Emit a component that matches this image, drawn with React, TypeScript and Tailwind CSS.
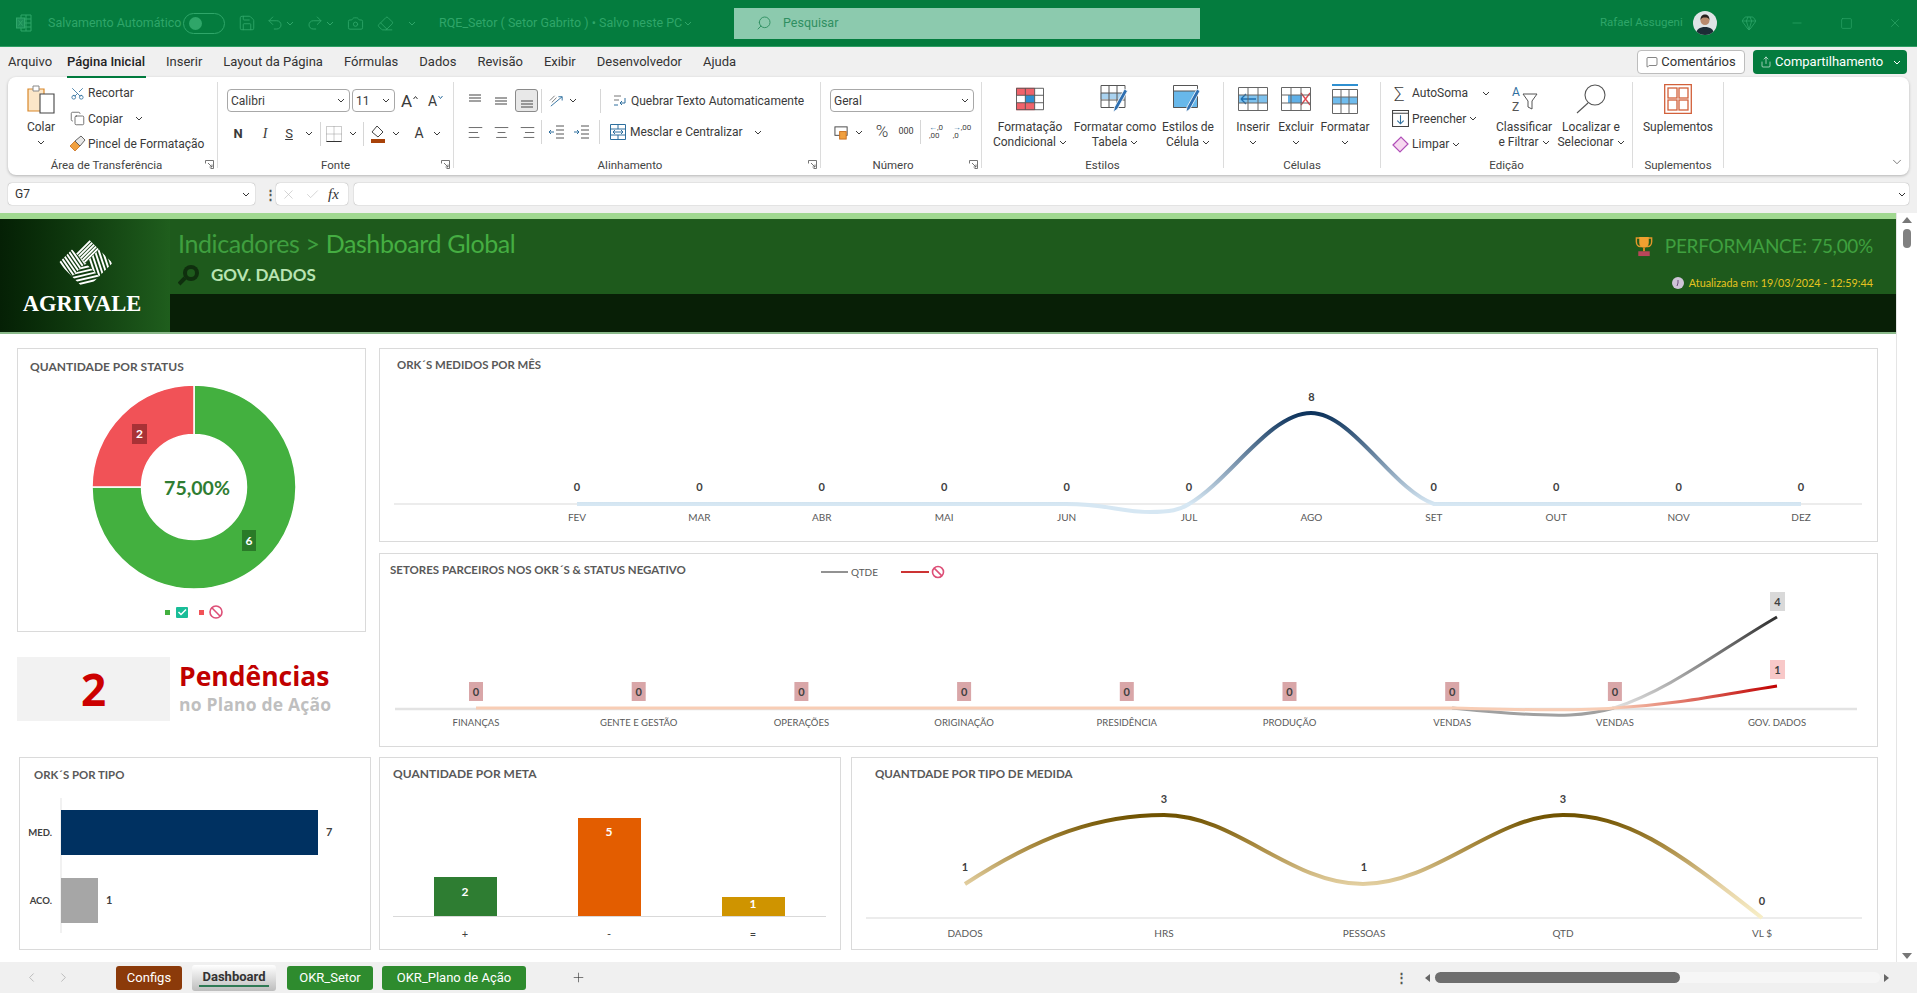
import type { ReactNode } from 'react'
import {
  AlignCenter,
  AlignLeft,
  AlignRight,
  Camera,
  Check,
  ChevronDown,
  ChevronLeft,
  ChevronRight,
  Copy,
  Eraser,
  Gem,
  MessageSquare,
  Minus,
  Plus,
  Redo2,
  Save,
  Scissors,
  Search,
  Share,
  Square,
  Undo2,
  X,
} from 'lucide-react'

const MONTHS = ['FEV', 'MAR', 'ABR', 'MAI', 'JUN', 'JUL', 'AGO', 'SET', 'OUT', 'NOV', 'DEZ']
const SECTORS = ['FINANÇAS', 'GENTE E GESTÃO', 'OPERAÇÕES', 'ORIGINAÇÃO', 'PRESIDÊNCIA', 'PRODUÇÃO', 'VENDAS', 'VENDAS']

function Chev({ className = '' }: { className?: string }) {
  return (
    <svg viewBox="0 0 8 5" className={`h-[5px] w-[8px] shrink-0 ${className}`} fill="none" stroke="currentColor" strokeWidth="1">
      <path d="M1 1l3 3 3-3" />
    </svg>
  )
}

function Sep({ className = '' }: { className?: string }) {
  return <div className={`h-[24px] w-px shrink-0 bg-[#d6d6d6] ${className}`} />
}

function Cell({ className, children }: { className: string; children: ReactNode }) {
  return <div className={`flex shrink-0 items-center justify-center ${className}`}>{children}</div>
}

function Lines({ y }: { y: number[] }) {
  return (
    <svg viewBox="0 0 18 18" className="h-[18px] w-[18px]" stroke="#555" strokeWidth="1.1">
      {y.map((v) => (
        <line key={v} x1={3} x2={15} y1={v} y2={v} />
      ))}
    </svg>
  )
}

function Launcher() {
  return (
    <svg viewBox="0 0 9 9" className="absolute right-[3px] top-[2px] h-[9px] w-[9px]" fill="none" stroke="#666" strokeWidth="0.9">
      <path d="M.5 3.5v-3h8v8h-3M3 3l4 4M7 4.5V7H4.5" />
    </svg>
  )
}

function Group({ width, label, labelClass = '', launcher, children }: { width: string; label: string; labelClass?: string; launcher?: boolean; children: ReactNode }) {
  return (
    <div className={`flex h-[86px] shrink-0 flex-col border-r border-[#dcdcdc] ${width}`}>
      <div className="h-[76px]">{children}</div>
      <div className={`relative h-[10px] text-center text-[11.5px] leading-[14px] text-[#444] ${labelClass}`}>
        {label}
        {launcher ? <Launcher /> : null}
      </div>
    </div>
  )
}

function BigBtn({ width, icon, top, bottom }: { width: string; icon: ReactNode; top: string; bottom?: string }) {
  return (
    <div className={`flex shrink-0 flex-col items-center ${width}`}>
      <div className="flex h-[34px] items-center justify-center">{icon}</div>
      <div className="mt-[4px] whitespace-nowrap text-center leading-[15px]">{top}</div>
      <div className="flex h-[15px] items-center gap-[3px] whitespace-nowrap leading-[15px]">
        {bottom}
        <Chev />
      </div>
    </div>
  )
}

function TableIcon({ w = 30, h = 24, children, grid = '#666' }: { w?: number; h?: number; children?: ReactNode; grid?: string }) {
  return (
    <svg viewBox="0 0 30 24" width={w} height={h} fill="none">
      {children}
      <path d="M.5.5h29v23H.5zM10 .5v23M20 .5v23M.5 8h29M.5 16h29" stroke={grid} strokeWidth="1" />
    </svg>
  )
}

function Brush() {
  return <path d="M27 6L17 24l-4 3 1-5L24 4z" fill="#2f6fb0" stroke="#fff" strokeWidth="0.8" />
}

function Prohibited({ x, y, r = 6 }: { x: number; y: number; r?: number }) {
  return (
    <g fill="none" stroke="#dd4f77" strokeWidth="1.6">
      <circle cx={x} cy={y} r={r} />
      <line x1={x - r * 0.7} y1={y - r * 0.7} x2={x + r * 0.7} y2={y + r * 0.7} />
    </g>
  )
}

function Logo() {
  return (
    <svg viewBox="0 0 56 56" className="h-[54px] w-[55px]" fill="none" stroke="#fff" strokeWidth="2">
      <defs>
        <clipPath id="logo-top"><path d="M28 0L42 14 28 28 14 14z" /></clipPath>
        <clipPath id="logo-right"><path d="M42 14L56 28 42 42 28 28z" /></clipPath>
        <clipPath id="logo-bottom"><path d="M28 28L42 42 28 56 14 42z" /></clipPath>
        <clipPath id="logo-left"><path d="M14 14L28 28 14 42 0 28z" /></clipPath>
      </defs>
      <g clipPath="url(#logo-top)">
        {[0, 4, 8, 12, 16, 20, 24, 28].map((d) => <line key={d} x1={8 + d} y1="30" x2={8 + d + 26} y2="4" />)}
      </g>
      <g clipPath="url(#logo-right)">
        {[0, 4, 8, 12, 16, 20, 24].map((d) => <line key={d} x1={28 + d} y1="10" x2={28 + d + 12} y2="46" />)}
      </g>
      <g clipPath="url(#logo-bottom)">
        {[0, 4, 8, 12, 16, 20, 24].map((d) => <line key={d} x1="12" y1={28 + d} x2="46" y2={20 + d} />)}
      </g>
      <g clipPath="url(#logo-left)">
        {[0, 4, 8, 12, 16, 20, 24].map((d) => <line key={d} x1={-8 + d} y1="12" x2={14 + d} y2="44" />)}
      </g>
    </svg>
  )
}

function TitleBar() {
  return (
    <div className="flex h-[47px] shrink-0 items-center border-b border-[#2f9e64] bg-[#047c3e] text-[12.5px] text-[#2fa669]">
      <svg viewBox="0 0 16 18" className="ml-[16px] h-[18px] w-[16px]" fill="none" stroke="#2fa669" strokeWidth="1">
        <path d="M5 1h10v16H5zM5 5h10M5 9h10M5 13h10M10 1v16" />
        <rect x="0.5" y="4" width="8" height="10" fill="#1c8f58" />
        <path d="M2.5 6.5l4 5M6.5 6.5l-4 5" />
      </svg>
      <span className="ml-[16px] w-[135px] whitespace-nowrap">Salvamento Automático</span>
      <div className="flex h-[21px] w-[42px] items-center rounded-full border border-[#2fa669] pl-[5px]">
        <div className="h-[13px] w-[13px] rounded-full bg-[#2fa669]" />
      </div>
      <Save className="ml-[13px] h-[18px] w-[18px]" strokeWidth={1.2} />
      <Undo2 className="ml-[10px] h-[18px] w-[18px]" strokeWidth={1.2} />
      <Chev className="ml-[2px]" />
      <Redo2 className="ml-[12px] h-[18px] w-[18px]" strokeWidth={1.2} />
      <Chev className="ml-[2px]" />
      <Camera className="ml-[13px] h-[17px] w-[17px]" strokeWidth={1.2} />
      <Eraser className="ml-[13px] h-[17px] w-[17px]" strokeWidth={1.2} />
      <Chev className="ml-[14px]" />
      <span className="ml-[23px] w-[245px] whitespace-nowrap">RQE_Setor ( Setor Gabrito )  •  Salvo neste PC</span>
      <Chev />
      <div className="ml-[42px] flex h-[31px] w-[466px] items-center bg-[#8ccaae] pl-[22px] text-[#2f8f61]">
        <Search className="h-[16px] w-[16px] -scale-x-100" strokeWidth={1.4} />
        <span className="ml-[11px]">Pesquisar</span>
      </div>
      <span className="ml-[400px] w-[90px] whitespace-nowrap text-[11.5px]">Rafael Assugeni</span>
      <svg viewBox="0 0 24 24" className="ml-[3px] h-[24px] w-[24px] rounded-full">
        <rect width="24" height="24" fill="#dfe4e6" />
        <path d="M3 24c0-6 4-8 9-8s9 2 9 8z" fill="#1d2c36" />
        <circle cx="12" cy="9.5" r="4.5" fill="#b98a6d" />
        <path d="M7.5 9c0-4 2-5.5 4.5-5.5S16.500 5 16.500 9c-1-2-2-2.500-4.500-2.500S8.500 7 7.500 9z" fill="#26201c" />
      </svg>
      <Gem className="ml-[24px] h-[16px] w-[16px]" strokeWidth={1.2} />
      <Minus className="ml-[33px] h-[14px] w-[14px]" strokeWidth={1.2} />
      <Square className="ml-[36px] h-[13px] w-[13px]" strokeWidth={1.2} />
      <X className="ml-[35px] h-[14px] w-[14px]" strokeWidth={1.2} />
    </div>
  )
}

function MenuRow() {
  const items = ['Inserir', 'Layout da Página', 'Fórmulas', 'Dados', 'Revisão', 'Exibir', 'Desenvolvedor', 'Ajuda']
  return (
    <div className="flex h-[30px] shrink-0 items-center bg-[#f0f0f0] pl-[8px] text-[13px] text-[#333]">
      <span className="w-[44px]">Arquivo</span>
      <span className="relative ml-[15px] w-[79px] whitespace-nowrap font-medium text-[#222]">
        Página Inicial
        <span className="absolute -bottom-[6px] left-0 h-[2px] w-full bg-[#007a3d]" />
      </span>
      <div className="ml-[20px] flex gap-[21px] whitespace-nowrap">
        {items.map((item) => (
          <span key={item}>{item}</span>
        ))}
      </div>
      <div className="ml-auto mr-[10px] flex items-center gap-[8px]">
        <div className="flex h-[24px] w-[108px] items-center justify-center gap-[3px] rounded-[4px] border border-[#bdbdbd] bg-white">
          <MessageSquare className="h-[12px] w-[12px]" strokeWidth={1.2} />
          Comentários
        </div>
        <div className="flex h-[24px] w-[154px] items-center gap-[3px] rounded-[4px] bg-[#047c3e] pl-[7px] text-white">
          <Share className="h-[12px] w-[12px]" strokeWidth={1.2} />
          Compartilhamento
          <Chev className="ml-[7px]" />
        </div>
      </div>
    </div>
  )
}

function Combo({ className, text }: { className: string; text: string }) {
  return (
    <div className={`flex h-[23px] shrink-0 items-center justify-between rounded-[4px] border border-[#a8a8a8] bg-white pl-[3px] pr-[4px] ${className}`}>
      {text}
      <Chev />
    </div>
  )
}

function Ribbon() {
  return (
    <div className="mx-[8px] flex h-[98px] shrink-0 items-start rounded-lg bg-white pt-[5px] text-[12px] text-[#3a3a3a] shadow-[0_1px_3px_rgba(0,0,0,0.25)]">
      <Group width="w-[210px]" label="Área de Transferência" labelClass="pr-[12px]" launcher>
        <div className="flex">
          <div className="ml-[13px] flex w-[40px] flex-col items-center">
            <div className="flex h-[34px] items-center">
              <svg viewBox="0 0 28 30" className="h-[30px] w-[28px]" fill="none">
                <path d="M1 5h16v22H1z" fill="#fbe6c8" stroke="#d9882a" strokeWidth="1.2" />
                <path d="M6 2h6v5H6z" fill="#fff" stroke="#888" />
                <path d="M13 10h14v19H13z" fill="#fff" stroke="#444" strokeWidth="1.1" />
              </svg>
            </div>
            <div className="mt-[4px] leading-[15px]">Colar</div>
            <div className="flex h-[15px] items-center"><Chev /></div>
          </div>
          <div className="ml-[7px] flex flex-col gap-[3.500px]">
            <div className="flex h-[22px] items-center">
              <Scissors className="ml-[2px] h-[15px] w-[15px] -rotate-90 text-[#2e6f9e]" strokeWidth={1.3} />
              <span className="ml-[3px]">Recortar</span>
            </div>
            <div className="flex h-[22px] items-center">
              <Copy className="ml-[2px] h-[15px] w-[15px]" strokeWidth={1.1} />
              <span className="ml-[3px]">Copiar</span>
              <Chev className="ml-[12px]" />
            </div>
            <div className="flex h-[22px] items-center">
              <svg viewBox="0 0 18 18" className="h-[18px] w-[18px]" fill="none">
                <path d="M7 6l5 5-5 5-5-5z" fill="#f0a040" stroke="#c9701e" strokeWidth="0.8" />
                <path d="M7 6l6-5 4 4-5 6z" fill="#e8e8e8" stroke="#555" strokeWidth="0.9" />
              </svg>
              <span className="ml-[2px] whitespace-nowrap">Pincel de Formatação</span>
            </div>
          </div>
        </div>
      </Group>

      <Group width="w-[236px]" label="Fonte" launcher>
        <div className="flex pl-[9px] pt-[7px]">
          <Combo className="w-[123px]" text="Calibri" />
          <Combo className="ml-[2px] w-[43px]" text="11" />
          <Cell className="ml-[5px] w-[19px] gap-px">
            <span className="text-[17px]">A</span>
            <svg viewBox="0 0 5 3" className="mb-[8px] h-[3px] w-[5px]" fill="none" stroke="#3a3a3a"><path d="M.5 3L2.500.5 4.500 3" /></svg>
          </Cell>
          <Cell className="ml-[7px] w-[19px] gap-px">
            <span className="text-[14px]">A</span>
            <svg viewBox="0 0 5 3" className="mb-[8px] h-[3px] w-[5px]" fill="none" stroke="#2e6f9e"><path d="M.5 0L2.500 2.500 4.500 0" /></svg>
          </Cell>
        </div>
        <div className="mt-[7px] flex h-[24px] items-center pl-[9px]">
          <Cell className="w-[22px] text-[13px] font-bold">N</Cell>
          <Cell className="ml-[6px] w-[20px] [font-family:'Liberation_Serif',serif] text-[14px] italic">I</Cell>
          <Cell className="ml-[4px] w-[20px] text-[13px] underline">S</Cell>
          <Cell className="ml-[4px] w-[12px]"><Chev /></Cell>
          <Sep className="ml-[5px]" />
          <Cell className="ml-[4px] w-[18px]">
            <svg viewBox="0 0 16 16" className="h-[16px] w-[16px]" fill="none" stroke="#999" strokeDasharray="1 1"><path d="M.5.5h15v15H.5zM8 .5v15M.5 8h15" /><path d="M.5 15.500h15" stroke="#333" strokeDasharray="0" /></svg>
          </Cell>
          <Cell className="ml-[4px] w-[12px]"><Chev /></Cell>
          <Sep className="ml-[4px]" />
          <Cell className="ml-[5px] w-[18px]">
            <svg viewBox="0 0 16 18" className="h-[18px] w-[16px]" fill="none">
              <path d="M7 1l6 6-5 5-6-5z" stroke="#444" />
              <rect x="1" y="14" width="14" height="4" fill="#a8420a" />
            </svg>
          </Cell>
          <Cell className="ml-[3px] w-[12px]"><Chev /></Cell>
          <Cell className="ml-[8px] w-[18px] text-[14px]">A</Cell>
          <Cell className="ml-[3px] w-[12px]"><Chev /></Cell>
        </div>
      </Group>

      <Group width="w-[367px]" label="Alinhamento" labelClass="pr-[14px]" launcher>
        <div className="mt-[7px] flex h-[23px] items-center pl-[11px]">
          <Cell className="w-[20px]"><Lines y={[3, 6, 9]} /></Cell>
          <Cell className="ml-[6px] w-[20px]"><Lines y={[6, 9, 12]} /></Cell>
          <Cell className="ml-[4px] h-[23px] w-[23px] rounded-[3px] border border-[#8a8a8a] bg-[#e8e8e8]"><Lines y={[9, 12, 15]} /></Cell>
          <Sep className="ml-[3px]" />
          <Cell className="ml-[5px] w-[18px]">
            <svg viewBox="0 0 18 18" className="h-[17px] w-[17px]" fill="none" stroke="#2e6f9e"><path d="M3 15L15 5M15 5h-4M15 5v4" /><path d="M2 9l5-5M4 11l5-5" stroke="#777" /></svg>
          </Cell>
          <Cell className="ml-[2px] w-[12px]"><Chev /></Cell>
          <Sep className="ml-[21px]" />
          <Cell className="ml-[11px] w-[15px]">
            <svg viewBox="0 0 15 18" className="h-[18px] w-[15px]" fill="none" stroke="#777"><path d="M2 4h7M2 8h5" /><path d="M2 13h4" stroke="#2e6f9e" /><path d="M13 6v5H8M8 11l2-2M8 11l2 2" stroke="#2e6f9e" /></svg>
          </Cell>
          <span className="ml-[4px] whitespace-nowrap">Quebrar Texto Automaticamente</span>
        </div>
        <div className="mt-[8px] flex h-[24px] items-center pl-[11px]">
          <Cell className="w-[20px]"><AlignLeft className="h-[17px] w-[17px] text-[#555]" strokeWidth={1.2} /></Cell>
          <Cell className="ml-[6px] w-[20px]"><AlignCenter className="h-[17px] w-[17px] text-[#555]" strokeWidth={1.2} /></Cell>
          <Cell className="ml-[6px] w-[20px]"><AlignRight className="h-[17px] w-[17px] text-[#555]" strokeWidth={1.2} /></Cell>
          <Sep className="ml-[4px]" />
          <Cell className="ml-[5px] w-[18px]">
            <svg viewBox="0 0 16 14" className="h-[14px] w-[16px]" fill="none" stroke="#555"><path d="M8 1h8M8 5h8M8 9h8M8 13h8" /><path d="M6 5H1M1 5l2-2M1 5l2 2" stroke="#2e6f9e" transform="translate(0 2)" /></svg>
          </Cell>
          <Cell className="ml-[7px] w-[18px]">
            <svg viewBox="0 0 16 14" className="h-[14px] w-[16px]" fill="none" stroke="#555"><path d="M8 1h8M8 5h8M8 9h8M8 13h8" /><path d="M1 5h5M6 5L4 3M6 5L4 7" stroke="#2e6f9e" transform="translate(0 2)" /></svg>
          </Cell>
          <Sep className="ml-[9px]" />
          <Cell className="ml-[10px] w-[16px]">
            <svg viewBox="0 0 16 16" className="h-[16px] w-[16px]" fill="none" stroke="#2e6f9e"><path d="M.5.5h15v15H.5zM.5 5h15M.5 11h15M8 .5V5M8 11v4.500" /><path d="M3 8h10M3 8l2-2M3 8l2 2M13 8l-2-2M13 8l-2 2" /></svg>
          </Cell>
          <span className="ml-[4px] whitespace-nowrap">Mesclar e Centralizar</span>
          <Chev className="ml-[11px]" />
        </div>
      </Group>

      <Group width="w-[161px]" label="Número" labelClass="pr-[16px]" launcher>
        <div className="pl-[9px] pt-[7px]">
          <Combo className="w-[144px]" text="Geral" />
        </div>
        <div className="mt-[8px] flex h-[24px] items-center pl-[11px]">
          <Cell className="w-[18px]">
            <svg viewBox="0 0 16 16" className="h-[15px] w-[15px]" fill="none"><rect x="1" y="2" width="13" height="9" stroke="#444" /><rect x="6" y="7" width="7" height="8" fill="#f0a040" stroke="#c9701e" /></svg>
          </Cell>
          <Cell className="ml-[3px] w-[12px]"><Chev /></Cell>
          <Cell className="ml-[8px] w-[18px] text-[17px] font-light">%</Cell>
          <Cell className="ml-[5px] w-[20px] text-[9px]">000</Cell>
          <Sep className="ml-[4px]" />
          <Cell className="ml-[6px] w-[18px] text-[8px] leading-[8px] text-[#444]">
            <span><span className="text-[#2e6f9e]">←</span>,0<br />,00</span>
          </Cell>
          <Cell className="ml-[8px] w-[18px] text-[8px] leading-[8px] text-[#444]">
            <span><span className="text-[#2e6f9e]">→</span>,00<br />,0</span>
          </Cell>
        </div>
      </Group>

      <Group width="w-[242px]" label="Estilos">
        <div className="flex pl-[10px]">
          <BigBtn
            width="w-[76px]"
            top="Formatação"
            bottom="Condicional"
            icon={
              <TableIcon w={28} h={24} grid="#555">
                <rect x="0" y="0" width="20" height="8" fill="#f0636b" />
                <rect x="10" y="8" width="10" height="8" fill="#2e8fd0" />
                <rect x="0" y="16" width="20" height="8" fill="#f0636b" />
              </TableIcon>
            }
          />
          <BigBtn
            width="w-[86px] ml-[4px]"
            top="Formatar como"
            bottom="Tabela"
            icon={
              <svg viewBox="0 0 30 28" className="h-[28px] w-[31px]" fill="none">
                <rect x="0" y="8" width="24" height="6" fill="#a9d2ef" />
                <path d="M.5.5h24v22H.5zM8.500.5v22M16.500.5v22M.5 8h24M.5 15h24" stroke="#555" />
                <Brush />
              </svg>
            }
          />
          <BigBtn
            width="w-[60px]"
            top="Estilos de"
            bottom="Célula"
            icon={
              <svg viewBox="0 0 30 28" className="h-[28px] w-[30px]" fill="none">
                <rect x="0" y="6" width="24" height="17" fill="#68b8ea" />
                <path d="M.5.5h24v22H.5zM.5 6h24" stroke="#555" />
                <Brush />
              </svg>
            }
          />
        </div>
      </Group>

      <Group width="w-[157px]" label="Células">
        <div className="flex pl-[8px]">
          <BigBtn
            width="w-[42px]"
            top="Inserir"
            icon={
              <TableIcon w={30} h={24}>
                <rect x="0" y="8" width="30" height="8" fill="#7fc2ee" />
                <path d="M18 12H3M3 12l5-5M3 12l5 5" stroke="#1f6fb0" strokeWidth="1.4" />
              </TableIcon>
            }
          />
          <BigBtn
            width="w-[44px]"
            top="Excluir"
            icon={
              <TableIcon w={30} h={24}>
                <rect x="7" y="8" width="14" height="8" fill="#5fb0e8" />
                <path d="M20 6l9 12M29 6l-9 12" stroke="#e0454d" strokeWidth="1.3" />
              </TableIcon>
            }
          />
          <BigBtn
            width="w-[54px]"
            top="Formatar"
            icon={
              <svg viewBox="0 0 26 30" className="h-[30px] w-[26px]" fill="none">
                <path d="M0 1h26" stroke="#2e8fd0" strokeWidth="2" />
                <rect y="13" width="26" height="7" fill="#6fbcee" />
                <path d="M.5 5.500h25v24H.5zM9 5.500v24M17 5.500v24M.5 13h25M.5 20h25" stroke="#666" />
              </svg>
            }
          />
        </div>
      </Group>

      <Group width="w-[252px]" label="Edição">
        <div className="flex">
          <div className="ml-[11px] flex w-[103px] flex-col gap-[3.500px]">
            <div className="flex h-[22px] items-center">
              <span className="ml-[2px] w-[14px] text-[17px] font-light leading-none">∑</span>
              <span className="ml-[4px]">AutoSoma</span>
              <Chev className="ml-[14px]" />
            </div>
            <div className="flex h-[22px] items-center">
              <svg viewBox="0 0 16 16" className="h-[17px] w-[17px]" fill="none" stroke="#444"><path d="M.5.5h15v15H.5zM.5 3h15" /><path d="M8 5v8M5 10l3 3 3-3" stroke="#2e6f9e" /></svg>
              <span className="ml-[3px]">Preencher</span>
              <Chev className="ml-[3px]" />
            </div>
            <div className="flex h-[22px] items-center">
              <svg viewBox="0 0 17 17" className="h-[17px] w-[17px]" fill="none"><path d="M1 9l8-8 7 7-8 8z" fill="#f7d8f0" stroke="#b04fb8" strokeWidth="1.2" /></svg>
              <span className="ml-[3px]">Limpar</span>
              <Chev className="ml-[3px]" />
            </div>
          </div>
          <BigBtn
            width="w-[58px]"
            top="Classificar"
            bottom="e Filtrar"
            icon={
              <svg viewBox="0 0 30 28" className="h-[28px] w-[30px]" fill="none">
                <text x="3" y="11" fontSize="12" fill="#2e6f9e">A</text>
                <text x="3" y="26" fontSize="12" fill="#555">Z</text>
                <path d="M14 9h14l-5 7v8l-4-2v-6z" stroke="#555" />
              </svg>
            }
          />
          <BigBtn
            width="w-[66px] ml-[5px]"
            top="Localizar e"
            bottom="Selecionar"
            icon={
              <svg viewBox="0 0 30 30" className="h-[30px] w-[30px]" fill="none" stroke="#555" strokeWidth="1.100">
                <circle cx="19" cy="11" r="10" />
                <path d="M12 19L1 29" />
              </svg>
            }
          />
        </div>
      </Group>

      <Group width="w-[91px]" label="Suplementos">
        <div className="flex flex-col items-center">
          <div className="flex h-[34px] items-center">
            <svg viewBox="0 0 28 30" className="h-[30px] w-[28px]" fill="none" stroke="#d2603a" strokeWidth="1.300">
              <path d="M.7.7h26.600v28.600H.7z" />
              <rect x="4" y="4" width="9" height="10" />
              <rect x="15" y="4" width="9" height="10" />
              <rect x="4" y="16" width="9" height="10" />
              <rect x="15" y="16" width="9" height="10" />
            </svg>
          </div>
          <div className="mt-[4px] leading-[15px]">Suplementos</div>
        </div>
      </Group>

      <div className="ml-auto mr-[5px] mt-[73px]">
        <ChevronDown className="h-[14px] w-[14px] text-[#555]" strokeWidth={1.3} />
      </div>
    </div>
  )
}

function FormulaBar() {
  return (
    <div className="mx-[8px] mt-[8px] flex h-[22px] shrink-0 items-center text-[12px] text-[#333]">
      <div className="flex h-[22px] w-[247px] items-center justify-between rounded-[4px] bg-white pl-[7px] pr-[5px] shadow-[0_0_1px_rgba(0,0,0,0.5)]">
        G7
        <Chev />
      </div>
      <div className="ml-[9px] w-[2px] text-[13px] font-bold leading-[5px] text-[#555]">⋮</div>
      <div className="ml-[10px] flex h-[22px] w-[72px] items-center rounded-[4px] bg-white pl-[5px] shadow-[0_0_1px_rgba(0,0,0,0.5)]">
        <X className="h-[15px] w-[15px] text-[#bbb]" strokeWidth={1} />
        <Check className="ml-[9px] h-[15px] w-[15px] text-[#bbb]" strokeWidth={1} />
        <span className="ml-[8px] [font-family:'Liberation_Serif',serif] text-[15px] italic text-[#333]">fx</span>
      </div>
      <div className="ml-[6px] flex h-[22px] flex-1 items-center justify-end rounded-[4px] bg-white pr-[3px] shadow-[0_0_1px_rgba(0,0,0,0.5)]">
        <Chev />
      </div>
    </div>
  )
}

function Card({ className, title, titleClass, children }: { className: string; title: string; titleClass: string; children: ReactNode }) {
  return (
    <div className={`shrink-0 overflow-hidden border border-[#dadada] bg-white ${className}`}>
      <div className={`whitespace-nowrap font-bold leading-[14px] text-[#595959] ${titleClass}`}>{title}</div>
      {children}
    </div>
  )
}

function StatusCard() {
  return (
    <Card className="h-[284px] w-[349px]" title="QUANTIDADE POR STATUS" titleClass="pl-[12px] pt-[11px] text-[12px]">
      <svg viewBox="18 374 347 257" className="block h-[257px] w-[347px]">
        <path d="M194 385A102 102 0 1 1 92 487L141.500 487A52.500 52.500 0 1 0 194 434.500Z" fill="#43b03f" stroke="#fff" strokeWidth="1.500" />
        <path d="M194 385A102 102 0 0 0 92 487L141.500 487A52.500 52.500 0 0 1 194 434.500Z" fill="#f15257" stroke="#fff" strokeWidth="1.500" />
        <rect x="132" y="424" width="15" height="20" fill="#a83236" />
        <text x="139.500" y="438" textAnchor="middle" fontSize="12" fontWeight="700" fill="#fff">2</text>
        <rect x="242" y="530" width="14" height="21" fill="#2a7a28" />
        <text x="249" y="545" textAnchor="middle" fontSize="12" fontWeight="700" fill="#fff">6</text>
        <text x="197" y="495" textAnchor="middle" fontSize="19.500" fontWeight="700" fill="#2f7d32">75,00%</text>
        <rect x="165" y="610" width="5" height="5" fill="#43b03f" />
        <rect x="176" y="607" width="12" height="11" rx="1" fill="#19bd98" />
        <path d="M178.500 612l2.500 2.500 5-5" fill="none" stroke="#fff" strokeWidth="1.500" />
        <rect x="199" y="610" width="5" height="5" fill="#f15257" />
        <Prohibited x={216} y={612} />
      </svg>
    </Card>
  )
}

function Pendencias() {
  return (
    <div className="mt-[25px] flex [font-family:'Open_Sans',sans-serif] font-bold">
      <div className="flex h-[64px] w-[153px] items-center justify-center bg-[#f2f2f2] text-[44px] leading-none text-[#cc0000]">2</div>
      <div className="ml-[9px] flex flex-col">
        <div className="mt-[3px] text-[26.500px] leading-[32px] text-[#c00000]">Pendências</div>
        <div className="text-[17.500px] leading-[24px] tracking-[0.2px] text-[#bfbfbf]">no Plano de Ação</div>
      </div>
    </div>
  )
}

function MonthsCard() {
  return (
    <Card className="h-[194px] w-[1499px]" title="ORK´S MEDIDOS POR MÊS" titleClass="pl-[17px] pt-[9px] text-[11.400px]">
      <svg viewBox="380 372 1497 169" className="block h-[169px] w-[1497px] text-[#595959]">
        <defs>
          <linearGradient id="months-line" gradientUnits="userSpaceOnUse" x1="0" x2="0" y1="413" y2="504">
            <stop offset="0" stopColor="#0d335c" />
            <stop offset="1" stopColor="#d6e7f3" />
          </linearGradient>
        </defs>
        <line x1="394" x2="1862" y1="504" y2="504" stroke="#d9d9d9" />
        <path d="M577 504H1066C1107 504 1120 512 1150 512C1170 512 1180 510 1189 504C1230 480 1270 413 1311 413C1352 413 1393 490 1434 504H1801" fill="none" stroke="url(#months-line)" strokeWidth="4" />
        {MONTHS.map((month, i) => (
          <g key={month} textAnchor="middle" fill="currentColor">
            <text x={577 + i * 122.4} y="521" fontSize="10">{month}</text>
            <text x={577 + i * 122.4} y={i === 6 ? 401 : 491} fontSize="11" fontWeight="700" fill="#404040">{i === 6 ? 8 : 0}</text>
          </g>
        ))}
      </svg>
    </Card>
  )
}

function SectorsCard() {
  return (
    <Card className="relative mt-[11px] h-[194px] w-[1499px]" title="SETORES PARCEIROS NOS OKR´S & STATUS NEGATIVO" titleClass="pl-[10px] pt-[9px] text-[11.500px]">
      <svg viewBox="0 0 130 14" className="absolute left-[441px] top-[11px] h-[14px] w-[130px]">
        <line x1="0" x2="27" y1="7" y2="7" stroke="#777" strokeWidth="1.600" />
        <text x="30" y="11" fontSize="10" fill="#595959">QTDE</text>
        <line x1="80" x2="108" y1="7" y2="7" stroke="#c00000" strokeWidth="1.600" />
        <Prohibited x={117} y={7} r={5.500} />
      </svg>
      <svg viewBox="380 577 1497 168" className="block h-[168px] w-[1497px]">
        <defs>
          <linearGradient id="sector-qtde" gradientUnits="userSpaceOnUse" x1="0" x2="0" y1="617" y2="706">
            <stop offset="0" stopColor="#2f2f2f" />
            <stop offset="1" stopColor="#dcdcdc" />
          </linearGradient>
          <linearGradient id="sector-neg" gradientUnits="userSpaceOnUse" x1="1614" x2="1777" y1="0" y2="0">
            <stop offset="0" stopColor="#f8cdb5" />
            <stop offset="1" stopColor="#c00000" />
          </linearGradient>
        </defs>
        <line x1="395" x2="1857" y1="709" y2="709" stroke="#e3e3e3" strokeWidth="2.500" />
        <path d="M1452 708C1490 712 1540 716 1570 715C1590 714 1600 712 1614 708" fill="none" stroke="#a0a0a0" strokeWidth="3" />
        <path d="M1614 708C1670 690 1720 650 1777 617" fill="none" stroke="url(#sector-qtde)" strokeWidth="3" />
        <path d="M476 708H1452C1500 709 1570 712 1614 708" fill="none" stroke="#f8cdb5" strokeWidth="3" />
        <path d="M1614 708C1680 704 1720 695 1777 686" fill="none" stroke="url(#sector-neg)" strokeWidth="3" />
        {SECTORS.map((sector, i) => {
          const x = 476 + i * 162.700
          return (
            <g key={i} textAnchor="middle">
              <rect x={x - 7} y="682" width="14" height="19" fill="#d9a6a8" />
              <text x={x} y="696" fontSize="11" fontWeight="700" fill="#404040">0</text>
              <text x={x} y="726" fontSize="9.500" fill="#595959">{sector}</text>
            </g>
          )
        })}
        <g textAnchor="middle">
          <rect x="1770" y="592" width="15" height="19" fill="#d9d9d9" />
          <text x="1777.500" y="606" fontSize="11" fontWeight="700" fill="#404040">4</text>
          <rect x="1770" y="660" width="15" height="19" fill="#f8c8c8" />
          <text x="1777.500" y="674" fontSize="11" fontWeight="700" fill="#404040">1</text>
          <text x="1777" y="726" fontSize="9.500" fill="#595959">GOV. DADOS</text>
        </g>
      </svg>
    </Card>
  )
}

function TypeCard() {
  return (
    <Card className="ml-[19px] h-[193px] w-[352px]" title="ORK´S POR TIPO" titleClass="pl-[14px] pt-[10px] text-[11.400px]">
      <svg viewBox="20 782 350 167" className="block h-[167px] w-[350px]">
        <line x1="61" x2="61" y1="798" y2="933" stroke="#e3e3e3" />
        <rect x="61" y="810" width="257" height="45" fill="#003161" />
        <rect x="61" y="878" width="37" height="45" fill="#a6a6a6" />
        <g fontSize="9.500" fontWeight="700" fill="#404040" textAnchor="end">
          <text x="52" y="836">MED.</text>
          <text x="52" y="904">ACO.</text>
        </g>
        <g fontSize="11" fontWeight="700" fill="#404040">
          <text x="326" y="836">7</text>
          <text x="106" y="904">1</text>
        </g>
      </svg>
    </Card>
  )
}

function GoalCard() {
  return (
    <Card className="ml-[8px] h-[193px] w-[462px]" title="QUANTIDADE POR META" titleClass="pl-[13px] pt-[9px] text-[12px]">
      <svg viewBox="380 781 460 168" className="block h-[168px] w-[460px]">
        <rect x="434" y="877" width="63" height="39" fill="#2e7d32" />
        <rect x="578" y="818" width="63" height="98" fill="#e35d00" />
        <rect x="722" y="897" width="63" height="19" fill="#cf9400" />
        <line x1="393" x2="826" y1="916.500" y2="916.500" stroke="#d9d9d9" />
        <g textAnchor="middle" fontSize="12" fontWeight="700" fill="#fff">
          <text x="465" y="896">2</text>
          <text x="609" y="836">5</text>
          <text x="753" y="908">1</text>
        </g>
        <g textAnchor="middle" fontSize="11" fill="#404040">
          <text x="465" y="938">+</text>
          <text x="609" y="938">-</text>
          <text x="753" y="938">=</text>
        </g>
      </svg>
    </Card>
  )
}

function MeasureCard() {
  const labels = [
    { name: 'DADOS', x: 965, y: 871, value: 1 },
    { name: 'HRS', x: 1164, y: 803, value: 3 },
    { name: 'PESSOAS', x: 1364, y: 871, value: 1 },
    { name: 'QTD', x: 1563, y: 803, value: 3 },
    { name: 'VL $', x: 1762, y: 905, value: 0 },
  ]
  return (
    <Card className="ml-[10px] h-[193px] w-[1027px]" title="QUANTDADE POR TIPO DE MEDIDA" titleClass="pl-[23px] pt-[9px] text-[11.600px]">
      <svg viewBox="852 781 1025 168" className="block h-[168px] w-[1025px]">
        <defs>
          <linearGradient id="measure-line" gradientUnits="userSpaceOnUse" x1="0" x2="0" y1="815" y2="918">
            <stop offset="0" stopColor="#6f5200" />
            <stop offset="0.300" stopColor="#a98a40" />
            <stop offset="0.700" stopColor="#e6d3a6" />
            <stop offset="1" stopColor="#f8efc8" />
          </linearGradient>
        </defs>
        <line x1="866" x2="1862" y1="918" y2="918" stroke="#d9d9d9" />
        <path d="M965 884C1040 835 1100 815 1164 815C1235 815 1290 884 1363 884C1435 884 1495 815 1563 815C1625 815 1670 845 1762 918" fill="none" stroke="url(#measure-line)" strokeWidth="4" />
        {labels.map((item) => (
          <g key={item.name} textAnchor="middle">
            <text x={item.x} y={item.y} fontSize="11" fontWeight="700" fill="#404040">{item.value}</text>
            <text x={item.x} y="937" fontSize="10" fill="#595959">{item.name}</text>
          </g>
        ))}
      </svg>
    </Card>
  )
}

function Header() {
  return (
    <>
      <div className="h-[6px] shrink-0 bg-[#a0d890]" />
      <div className="flex h-[115px] shrink-0 border-b-2 border-[#8ab98a]">
        <div className="flex w-[170px] flex-col items-center bg-gradient-to-r from-[#052005] to-[#1f5e1d] pt-[17px]">
          <Logo />
          <div className="mt-[2px] -translate-x-[3px] [font-family:'Liberation_Serif',serif] text-[22.500px] font-bold leading-[24px] text-white">AGRIVALE</div>
        </div>
        <div className="flex flex-1 flex-col">
          <div className="flex h-[75px] justify-between bg-[#1e5a1c]">
            <div className="pl-[8px] pt-[9px]">
              <div className="text-[25px] leading-[30px] tracking-[-0.4px] text-[#3f9f3f]">
                Indicadores &gt; <span className="text-[#45ae42]">Dashboard Global</span>
              </div>
              <div className="mt-[4px] flex items-center">
                <svg viewBox="0 0 22 22" className="h-[22px] w-[22px]">
                  <circle cx="13" cy="9" r="8" fill="#0f2f0e" />
                  <circle cx="13" cy="9" r="4" fill="#1e5a1c" />
                  <path d="M7 14l-6 6" stroke="#0f2f0e" strokeWidth="4" />
                </svg>
                <span className="ml-[11px] text-[17px] font-bold text-[#b9e4b2]">GOV. DADOS</span>
              </div>
            </div>
            <div className="flex flex-col items-end pr-[23px] pt-[15px]">
              <div className="flex items-center text-[#3fa03f]">
                <svg viewBox="0 0 18 22" className="h-[21px] w-[18px]">
                  <path d="M1 2h16v4c0 3-2 5-4 5H5C3 11 1 9 1 6z" fill="none" stroke="#e3962a" strokeWidth="1.500" />
                  <path d="M4 1h10v6c0 3-2 5-5 5S4 10 4 7z" fill="#f0a030" />
                  <rect x="8" y="12" width="2" height="4" fill="#d98a20" />
                  <rect x="3" y="16" width="12" height="5" fill="#b8465a" />
                </svg>
                <span className="ml-[12px] text-[19px] leading-[24px] tracking-[-0.3px]">PERFORMANCE: 75,00%</span>
              </div>
              <div className="mt-[18px] flex items-center text-[10.800px] leading-[14px] text-[#e6c420]">
                <svg viewBox="0 0 12 12" className="h-[12px] w-[12px]">
                  <circle cx="6" cy="6" r="6" fill="#cfc4d8" />
                  <path d="M6 3v3l-1 3" stroke="#6a4a7a" fill="none" />
                </svg>
                <span className="ml-[5px]">Atualizada em: 19/03/2024 - 12:59:44</span>
              </div>
            </div>
          </div>
          <div className="h-[38px] bg-[#081f06]" />
        </div>
      </div>
    </>
  )
}

function SheetTabs() {
  const tabClass = 'flex h-[24px] items-center justify-center rounded-[3px] text-white'
  return (
    <div className="flex h-[31px] shrink-0 items-center bg-[#f0f0f0] text-[13px]">
      <ChevronLeft className="ml-[24px] h-[15px] w-[15px] text-[#aaa]" strokeWidth={1.2} />
      <ChevronRight className="ml-[17px] h-[15px] w-[15px] text-[#aaa]" strokeWidth={1.2} />
      <div className={`ml-[45px] w-[66px] bg-[#8b3a0a] ${tabClass}`}>Configs</div>
      <div className="ml-[10px] flex h-[26px] w-[84px] flex-col items-center justify-center rounded-[3px] bg-gradient-to-b from-white to-[#bdbdbd] font-bold leading-[16px] text-[#333]">
        Dashboard
        <div className="h-[2px] w-[70px] bg-[#2f7a55]" />
      </div>
      <div className={`ml-[11px] w-[86px] bg-[#2e8b2e] ${tabClass}`}>OKR_Setor</div>
      <div className={`ml-[9px] w-[144px] bg-[#2e8b2e] ${tabClass}`}>OKR_Plano de Ação</div>
      <Plus className="ml-[45px] h-[15px] w-[15px] text-[#333]" strokeWidth={1} />
      <div className="ml-[809px] text-[13px] font-bold leading-none text-[#555]">⋮</div>
      <svg viewBox="0 0 5 8" className="ml-[17px] h-[8px] w-[5px]"><path d="M5 0v8L0 4z" fill="#666" /></svg>
      <div className="ml-[5px] flex h-[11px] w-[445px] items-center rounded-full bg-[#f6f6f6]">
        <div className="h-[11px] w-[245px] rounded-full bg-[#6e6e6e]" />
      </div>
      <svg viewBox="0 0 5 8" className="ml-[4px] h-[8px] w-[5px]"><path d="M0 0v8l5-4z" fill="#666" /></svg>
    </div>
  )
}

export default function App() {
  return (
    <div className="flex h-[993px] w-[1917px] flex-col overflow-hidden bg-[#f0f0f0] [font-family:Roboto,sans-serif]">
      <TitleBar />
      <MenuRow />
      <Ribbon />
      <FormulaBar />
      <div className="mt-[8px] flex h-[749px] shrink-0 bg-white [font-family:Lato,sans-serif]">
        <div className="flex w-[1897px] flex-col border-r border-[#e5e5e5]">
          <Header />
          <div className="flex pl-[17px] pt-[14px]">
            <div className="w-[349px]">
              <StatusCard />
              <Pendencias />
            </div>
            <div className="ml-[13px]">
              <MonthsCard />
              <SectorsCard />
            </div>
          </div>
          <div className="mt-[10px] flex">
            <TypeCard />
            <GoalCard />
            <MeasureCard />
          </div>
        </div>
        <div className="flex flex-1 flex-col items-center justify-between pb-[3px] pt-[4px]">
          <div>
            <svg viewBox="0 0 10 6" className="h-[6px] w-[10px]"><path d="M0 6l5-6 5 6z" fill="#777" /></svg>
            <div className="ml-px mt-[6px] h-[19px] w-[8px] rounded-full bg-[#808080]" />
          </div>
          <svg viewBox="0 0 10 6" className="h-[6px] w-[10px]"><path d="M0 0l5 6 5-6z" fill="#777" /></svg>
        </div>
      </div>
      <SheetTabs />
    </div>
  )
}
